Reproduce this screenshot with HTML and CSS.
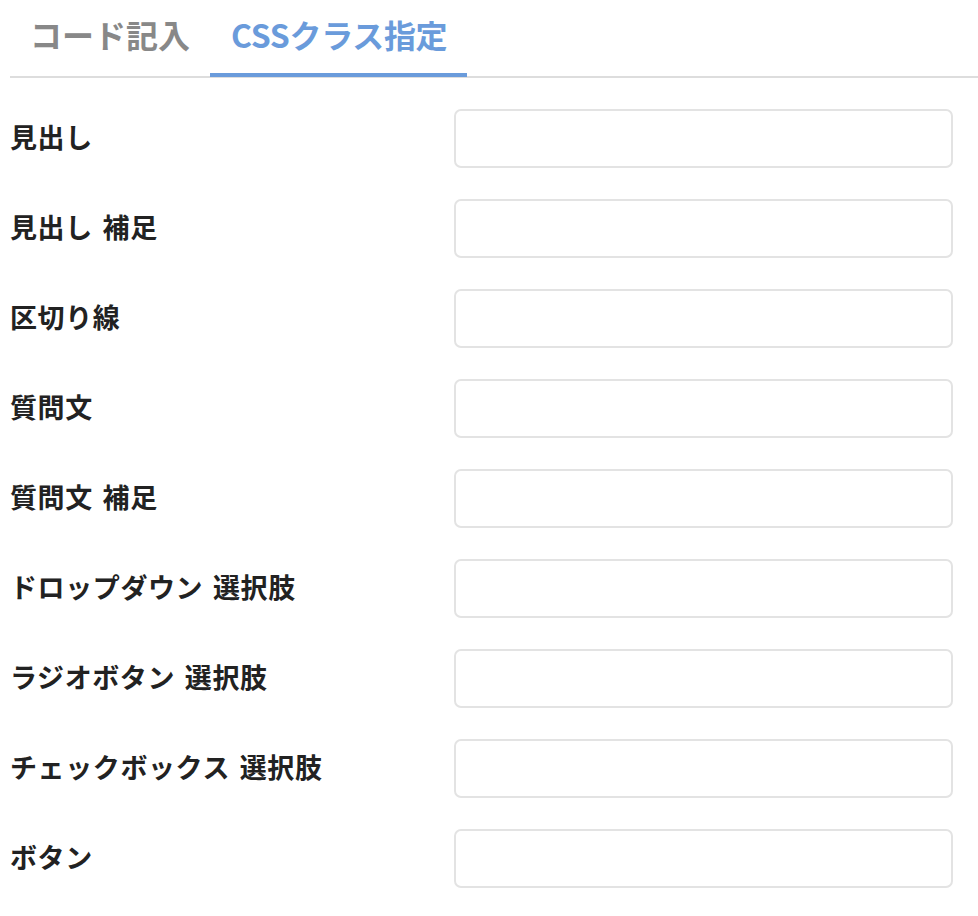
FILE: index.html
```html
<!DOCTYPE html>
<html lang="ja">
<head>
<meta charset="utf-8">
<link rel="stylesheet" href="styles.css">
</head>
<body>
<div class="page">
  <div class="tabs">
    <div class="tab">コード記入</div>
    <div class="tab active">CSSクラス指定</div>
  </div>
  <div class="form">
    <div class="row"><div class="label">見出し</div><input class="field" type="text"></div>
    <div class="row"><div class="label">見出し 補足</div><input class="field" type="text"></div>
    <div class="row"><div class="label">区切り線</div><input class="field" type="text"></div>
    <div class="row"><div class="label">質問文</div><input class="field" type="text"></div>
    <div class="row"><div class="label">質問文 補足</div><input class="field" type="text"></div>
    <div class="row"><div class="label">ドロップダウン 選択肢</div><input class="field" type="text"></div>
    <div class="row"><div class="label">ラジオボタン 選択肢</div><input class="field" type="text"></div>
    <div class="row"><div class="label">チェックボックス 選択肢</div><input class="field" type="text"></div>
    <div class="row"><div class="label">ボタン</div><input class="field" type="text"></div>
  </div>
</div>
</body>
</html>
```
FILE: styles.css
```css
html, body {
  margin: 0;
  padding: 0;
  background: #fff;
}
body {
  font-family: "Noto Sans CJK JP", "Noto Sans", sans-serif;
  color: #222;
}
.page {
  padding-left: 10px;
}
.tabs {
  display: flex;
  border-bottom: 2px solid #dddddd;
}
.tab {
  box-sizing: border-box;
  height: 77px;
  padding: 12px 20px 0;
  line-height: 45px;
  font-size: 32px;
  font-weight: 700;
  color: #888888;
  border-bottom: 4px solid transparent;
  margin-bottom: -1px;
}
.tab.active {
  padding: 12px 20px 0 21px;
  letter-spacing: -0.3px;
  color: #6a9bdb;
  border-bottom-color: #6a9bdb;
}
.form {
  display: flex;
  flex-direction: column;
  gap: 31px;
  padding-top: 31px;
}
.row {
  display: flex;
  align-items: center;
}
.label {
  flex: 0 0 444px;
  font-size: 27px;
  font-weight: 700;
  letter-spacing: 0.6px;
  word-spacing: 3px;
  line-height: 36px;
  padding-bottom: 3px;
  color: #222;
}
.field {
  box-sizing: border-box;
  width: 499px;
  height: 59px;
  border: 2px solid #e3e3e3;
  border-radius: 7px;
  background: #fff;
  margin: 0;
  padding: 0 12px;
  outline: none;
}
```
